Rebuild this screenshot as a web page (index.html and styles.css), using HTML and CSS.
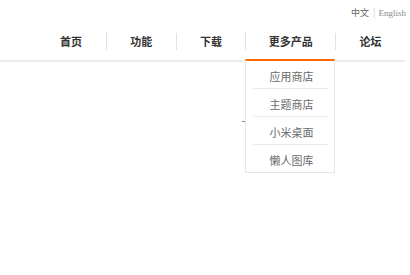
FILE: index.html
```html
<!DOCTYPE html>
<html lang="zh-CN">
<head>
    <meta charset="UTF-8">
    <meta name="viewport" content="width=device-width, initial-scale=1.0">
    <title>导航</title>
    <link rel="stylesheet" href="styles.css">
</head>
<body>
    <div class="header">
        <div class="lang">
            <a href="#" class="zh">中文</a><span class="bar">|</span><a href="#" class="en">English</a>
        </div>
        <ul class="nav">
            <li><a href="#">首页</a></li>
            <li><a href="#">功能</a></li>
            <li><a href="#">下载</a></li>
            <li class="more">
                <a href="#">更多产品</a>
                <ul class="dropdown">
                    <li><a href="#">应用商店</a></li>
                    <li><a href="#">主题商店</a></li>
                    <li><a href="#">小米桌面</a></li>
                    <li><a href="#">懒人图库</a></li>
                </ul>
            </li>
            <li><a href="#">论坛</a></li>
        </ul>
    </div>
    <div class="content">
        <span class="mark"></span>
    </div>
</body>
</html>
```

FILE: styles.css
```css
html, body {
    height: 100%;
}
body {
    margin: 0;
    font-family: "Noto Sans CJK SC", sans-serif;
    background: #fff;
}
a {
    text-decoration: none;
}
.header {
    width: 405px;
    border-bottom: 2px solid #ebebeb;
}
.lang {
    height: 26px;
    line-height: 26px;
    text-align: right;
    margin-right: -1px;
    font-size: 9px;
    color: #777;
}
.lang .zh {
    color: #666;
}
.lang .bar {
    color: #ccc;
    margin: 0 3px 0 4px;
}
.lang .en {
    font-family: "Liberation Serif", serif;
    color: #888;
}
.nav {
    display: flex;
    list-style: none;
    margin: 0;
    padding: 0 0 0 36px;
    height: 34px;
}
.nav > li {
    width: 70px;
    box-sizing: border-box;
    text-align: center;
}
.nav > li + li > a {
    border-left: 1px solid #e2e2e2;
}
.nav > li > a {
    display: block;
    margin-top: 7px;
    height: 17px;
    line-height: 17px;
    font-size: 11px;
    font-weight: bold;
    color: #333;
}
.nav > .more {
    width: 90px;
    position: relative;
}
.dropdown {
    position: absolute;
    top: 33px;
    left: 0;
    width: 90px;
    margin: 0;
    padding: 0;
    list-style: none;
    box-sizing: border-box;
    background: #fff;
    border: 1px solid #e6e6e6;
    border-top: 2px solid #ff6a00;
    z-index: 2;
}
.dropdown li {
    margin: 0 5px 0 7px;
    height: 27px;
    line-height: 27px;
    border-bottom: 1px solid #ebebeb;
}
.dropdown li:last-child {
    border-bottom: none;
}
.dropdown a {
    font-size: 11px;
    color: #6a6a6a;
}
.content {
    padding-top: 59px;
}
.mark {
    display: block;
    margin-left: 242px;
    width: 3px;
    height: 1px;
    background: #888;
}
```
